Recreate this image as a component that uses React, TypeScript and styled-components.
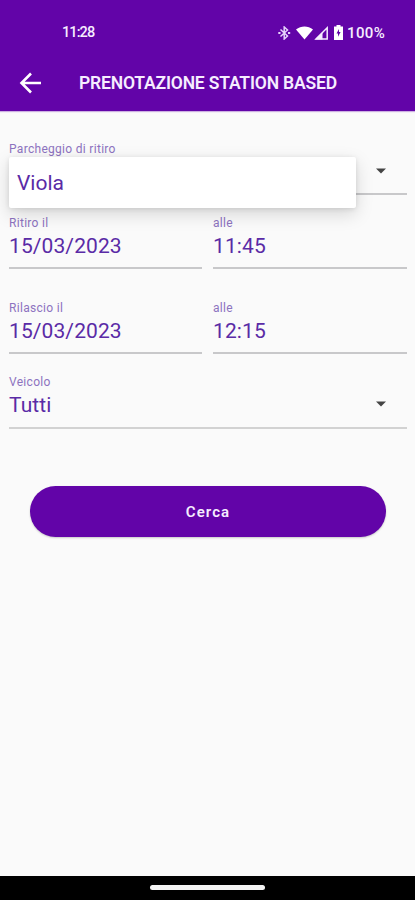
import React from "react";
import styled, { createGlobalStyle } from "styled-components";

const GlobalStyle = createGlobalStyle`
  * { box-sizing: border-box; }
  body { margin: 0; background: #fafafa; font-family: Roboto, sans-serif; }
`;

const Screen = styled.div`
  width: 415px;
  height: 900px;
  display: flex;
  flex-direction: column;
  background: #fafafa;
  overflow: hidden;
`;

const Header = styled.header`
  height: 111px;
  flex: none;
  background: #6204a8;
  color: #f6edff;
  box-shadow: 0 1px 1px rgba(98, 4, 168, 0.3);
`;

const StatusBar = styled.div`
  height: 56px;
  padding: 9px 29px 0 62px;
  display: flex;
  align-items: center;
  justify-content: space-between;
`;

const Clock = styled.span`
  font-size: 14.5px;
  font-weight: 500;
  letter-spacing: -0.9px;
`;

const StatusIcons = styled.div`
  display: flex;
  align-items: center;
  svg { display: block; flex: none; }
`;

const BatteryLevel = styled.span`
  margin-left: 3px;
  width: 39px;
  font-size: 15px;
  font-weight: 500;
  letter-spacing: 0.4px;
  white-space: nowrap;
`;

const TitleBar = styled.div`
  height: 55px;
  padding: 0 0 2px 19px;
  display: flex;
  align-items: center;
  svg { display: block; }
`;

const Title = styled.h1`
  margin: 0 0 0 37px;
  font-size: 17.5px;
  line-height: 22px;
  font-weight: 600;
  letter-spacing: -0.18px;
  white-space: nowrap;
`;

const Form = styled.main`
  flex: 1;
  padding: 31px 8px 0 9px;
`;

const Row = styled.div<{ $gap: number }>`
  display: grid;
  grid-template-columns: 193px 194px;
  column-gap: 11px;
  margin-top: ${(p) => p.$gap}px;
`;

const FieldBox = styled.div<{ $gap?: number; $soft?: boolean }>`
  position: relative;
  height: ${(p) => (p.$soft ? 54 : 53)}px;
  margin-top: ${(p) => p.$gap ?? 0}px;
  border-bottom: 2px solid ${(p) => (p.$soft ? "#d2d2d2" : "#c8c8ca")};
`;

const Label = styled.div`
  height: 14px;
  font-size: 12px;
  line-height: 14px;
  letter-spacing: 0.3px;
  color: #8d73c0;
`;

const Value = styled.div`
  display: flex;
  align-items: center;
  justify-content: space-between;
  height: 32px;
  padding-right: 21px;
  font-size: 21px;
  letter-spacing: 0.1px;
  color: #5a2ba6;
  svg { display: block; margin: 0 0 2px auto; }
`;

const Popup = styled.div`
  position: absolute;
  z-index: 1;
  left: 0;
  top: 15px;
  width: 347px;
  height: 51px;
  padding: 1px 0 0 8px;
  display: flex;
  align-items: center;
  border-radius: 2px;
  background: #fff;
  box-shadow: 0 6px 18px rgba(0, 0, 0, 0.15), 0 1px 5px rgba(0, 0, 0, 0.1);
  color: #5a2ba6;
  font-size: 21px;
  letter-spacing: 0;
`;

const SearchButton = styled.button`
  display: block;
  width: 356px;
  height: 51px;
  margin: 57px 0 0 21px;
  padding: 1px 0 0;
  border: 0;
  border-radius: 26px;
  background: #6204a8;
  box-shadow: 0 1px 2px rgba(0, 0, 0, 0.2);
  color: #f6edff;
  font: 600 15px Roboto, sans-serif;
  letter-spacing: 1.1px;
`;

const NavigationBar = styled.footer`
  height: 24px;
  flex: none;
  display: flex;
  justify-content: center;
  padding-top: 9px;
  background: #000;
`;

const HomeHandle = styled.div`
  width: 115px;
  height: 5px;
  border-radius: 3px;
  background: #f4f4f4;
`;

const Caret = () => (
  <svg width="10" height="6" viewBox="0 0 10 6">
    <path d="M0 .5h10L5 5.5z" fill="#444" />
  </svg>
);

const Field = ({ label, value, gap, soft, select, children }: {
  label: string;
  value?: string;
  gap?: number;
  soft?: boolean;
  select?: boolean;
  children?: React.ReactNode;
}) => (
  <FieldBox $gap={gap} $soft={soft}>
    <Label>{label}</Label>
    <Value>{value}{select && <Caret />}</Value>
    {children}
  </FieldBox>
);

export default function App() {
  return (
    <>
      <GlobalStyle />
      <Screen>
        <Header>
          <StatusBar>
            <Clock>11:28</Clock>
            <StatusIcons>
              <svg width="18" height="14" viewBox="0 0 18 14" fill="none" stroke="#e6d4fb" strokeWidth="1.5">
                <path d="M2.500 3.500 9.500 10 6.200 13V1l3.300 3-7 6.500" />
                <path d="M.3 7h2.200M10 7h2.200" strokeWidth="2" />
              </svg>
              <svg width="18" height="14" viewBox="0 0 18 14" fill="#fff">
                <path d="M0 3.500C5-.6 12-.6 17 3.500L8.500 13.500z" />
              </svg>
              <svg width="19" height="14" viewBox="0 0 19 14">
                <path d="M2 13 13.200 1.800V13z" fill="none" stroke="#f6edff" strokeWidth="1.500" />
                <path d="M1 13.500 8.500 6V13.500z" fill="#f6edff" />
              </svg>
              <svg width="11" height="15" viewBox="0 0 11 15">
                <path d="M3.500 0h4v1.500H10V15H1V1.500h2.500z" fill="#fff" />
                <path d="M6 4 3.500 8.500H5v3.200l2.600-4.700H6z" fill="#6204a8" />
              </svg>
              <BatteryLevel>100%</BatteryLevel>
            </StatusIcons>
          </StatusBar>
          <TitleBar>
            <svg width="23" height="22" viewBox="0 0 23 22" fill="none" stroke="#fff" strokeWidth="2.600">
              <path d="M22 11H3M12 1.500 2.500 11l9.500 9.500" />
            </svg>
            <Title>PRENOTAZIONE STATION BASED</Title>
          </TitleBar>
        </Header>
        <Form>
          <Field label="Parcheggio di ritiro" select>
            <Popup>Viola</Popup>
          </Field>
          <Row $gap={21}>
            <Field label="Ritiro il" value="15/03/2023" />
            <Field label="alle" value="11:45" />
          </Row>
          <Row $gap={32}>
            <Field label="Rilascio il" value="15/03/2023" />
            <Field label="alle" value="12:15" />
          </Row>
          <Field label="Veicolo" value="Tutti" gap={21} soft select />
          <SearchButton>Cerca</SearchButton>
        </Form>
        <NavigationBar>
          <HomeHandle />
        </NavigationBar>
      </Screen>
    </>
  );
}
